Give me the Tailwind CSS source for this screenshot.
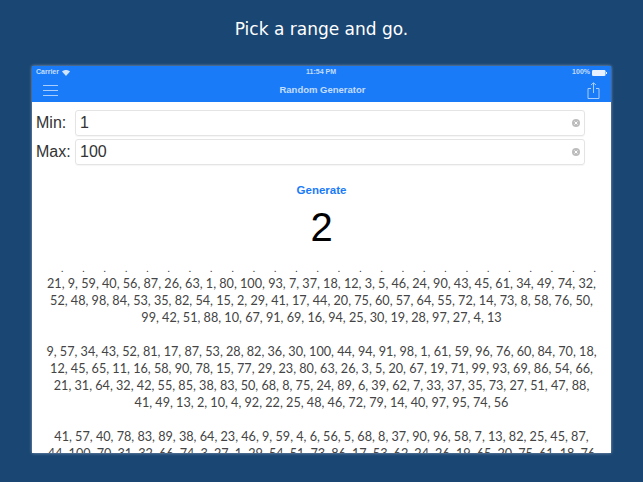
<!DOCTYPE html>
<html lang="en">
<head>
  <meta charset="UTF-8">
  <meta name="viewport" content="width=device-width, initial-scale=1.0">
  <title>Random Generator</title>
  <script src="https://cdn.jsdelivr.net/npm/@tailwindcss/browser@4"></script>
</head>
<body class="bg-[#1a4673] w-[643px] h-[482px] overflow-hidden font-['Lato',sans-serif]">
  <h1 class="h-[66px] pt-[17px] text-center text-white text-[17px] leading-[24px] font-['DejaVu_Sans',sans-serif]">Pick a range and go.</h1>

  <div class="mx-[32px] w-[579px] h-[387px] bg-white overflow-hidden shadow-[0_0_3px_rgba(255,255,255,0.5)]">
    <!-- status bar + nav -->
    <div class="h-[36px] bg-[#1a7bf8] text-white">
      <div class="h-[13px] px-[4px] flex items-center justify-between text-[7px] font-bold text-white/75 font-['Liberation_Sans',sans-serif]">
        <div class="flex items-center gap-[3px]">
          <span>Carrier</span>
          <svg width="8" height="6" viewBox="0 0 8 6"><path d="M0 1.6C2.3-.4 5.7-.4 8 1.6L4 6z" fill="#cfe3fd"/></svg>
        </div>
        <span>11:54 PM</span>
        <div class="flex items-center gap-[2px]">
          <span>100%</span>
          <svg width="15" height="6" viewBox="0 0 15 6"><rect x="0" y="0" width="13.5" height="6" rx="1.2" fill="#e6f0fe"/><rect x="14" y="2" width="1" height="2" fill="#e6f0fe"/></svg>
        </div>
      </div>
      <div class="h-[23px] pl-[11px] pr-[11px] flex items-center justify-between">
        <svg width="15" height="13" viewBox="0 0 15 13" stroke="#a9cdfc" stroke-width="1"><path d="M0 1.5H15M0 6.5H15M0 11.5H15"/></svg>
        <span class="text-[9.5px] font-bold text-white/75 font-['Liberation_Sans',sans-serif]">Random Generator</span>
        <svg width="13" height="17" viewBox="0 0 13 17" fill="none" stroke="#a9cdfc" stroke-width="1"><path d="M4 6.5H1V16.5H12V6.5H9M6.5 11V1M4 3L6.5 .8L9 3"/></svg>
      </div>
    </div>

    <!-- inputs -->
    <div class="pt-[8px] pl-[4px] pr-[26px] flex flex-col gap-[3px] text-[16px] leading-[24px] text-[#333] font-['Liberation_Sans',sans-serif]">
      <div class="flex items-center h-[26px]">
        <span class="w-[39px]">Min:</span>
        <div class="flex-1 h-[26px] border border-[#e4e4e4] rounded-[3px] pl-[4px] pr-[4px] flex items-center justify-between shadow-[0_1px_1px_rgba(0,0,0,0.04)]">
          <span>1</span>
          <svg width="8" height="8" viewBox="0 0 8 8"><circle cx="4" cy="4" r="4" fill="#bdbdbd"/><path d="M2.5 2.5L5.5 5.5M5.5 2.5L2.5 5.5" stroke="#fff" stroke-width="1"/></svg>
        </div>
      </div>
      <div class="flex items-center h-[26px]">
        <span class="w-[39px]">Max:</span>
        <div class="flex-1 h-[26px] border border-[#e4e4e4] rounded-[3px] pl-[4px] pr-[4px] flex items-center justify-between shadow-[0_1px_1px_rgba(0,0,0,0.04)]">
          <span>100</span>
          <svg width="8" height="8" viewBox="0 0 8 8"><circle cx="4" cy="4" r="4" fill="#bdbdbd"/><path d="M2.5 2.5L5.5 5.5M5.5 2.5L2.5 5.5" stroke="#fff" stroke-width="1"/></svg>
        </div>
      </div>
    </div>

    <div class="mt-[18px] text-center text-[11.5px] leading-[14px] font-bold text-[#1a7bf8] font-['Liberation_Sans',sans-serif]">Generate</div>
    <div class="mt-[7px] text-center text-[40px] leading-[46px] text-black font-['Liberation_Sans',sans-serif]">2</div>

    <!-- results -->
    <div class="mt-[14px] text-center text-[12.65px] leading-[17px] text-[#444]">
      <div class="h-[11px] pl-[29px] pr-[15px] flex justify-between text-[10px] leading-[9px] text-[#333]">
        <span>.</span><span>.</span><span>.</span><span>.</span><span>.</span><span>.</span><span>.</span><span>.</span><span>.</span><span>.</span><span>.</span><span>.</span><span>.</span><span>.</span><span>.</span><span>.</span><span>.</span><span>.</span><span>.</span><span>.</span><span>.</span><span>.</span><span>.</span><span>.</span><span>.</span><span>.</span>
      </div>
      <p>21, 9, 59, 40, 56, 87, 26, 63, 1, 80, 100, 93, 7, 37, 18, 12, 3, 5, 46, 24, 90, 43, 45, 61, 34, 49, 74, 32,<br>
      52, 48, 98, 84, 53, 35, 82, 54, 15, 2, 29, 41, 17, 44, 20, 75, 60, 57, 64, 55, 72, 14, 73, 8, 58, 76, 50,<br>
      99, 42, 51, 88, 10, 67, 91, 69, 16, 94, 25, 30, 19, 28, 97, 27, 4, 13</p>
      <p class="mt-[17px]">9, 57, 34, 43, 52, 81, 17, 87, 53, 28, 82, 36, 30, 100, 44, 94, 91, 98, 1, 61, 59, 96, 76, 60, 84, 70, 18,<br>
      12, 45, 65, 11, 16, 58, 90, 78, 15, 77, 29, 23, 80, 63, 26, 3, 5, 20, 67, 19, 71, 99, 93, 69, 86, 54, 66,<br>
      21, 31, 64, 32, 42, 55, 85, 38, 83, 50, 68, 8, 75, 24, 89, 6, 39, 62, 7, 33, 37, 35, 73, 27, 51, 47, 88,<br>
      41, 49, 13, 2, 10, 4, 92, 22, 25, 48, 46, 72, 79, 14, 40, 97, 95, 74, 56</p>
      <p class="mt-[17px]">41, 57, 40, 78, 83, 89, 38, 64, 23, 46, 9, 59, 4, 6, 56, 5, 68, 8, 37, 90, 96, 58, 7, 13, 82, 25, 45, 87,<br>
      44, 100, 70, 31, 32, 66, 74, 3, 27, 1, 29, 54, 51, 73, 86, 17, 53, 62, 24, 26, 19, 65, 20, 75, 61, 18, 76</p>
    </div>
  </div>
</body>
</html>
